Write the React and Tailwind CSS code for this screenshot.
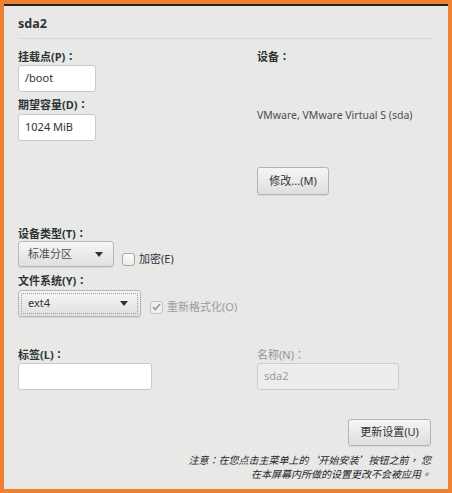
import React from 'react';

const font = { fontFamily: '"Noto Sans", "Noto Sans CJK SC", sans-serif' };
const tc = { fontFamily: '"Noto Sans CJK TC", sans-serif' };

// centred full-width punctuation, as the original GTK rendering shows it
const P = ({ children }) => <span style={tc}>{children}</span>;

const Label = ({ children, className = '' }) => (
  <div className={`h-[14px] leading-[14px] text-[11px] font-bold text-[#2e3436] ${className}`}>
    {children}
    <P>：</P>
  </div>
);

const Arrow = () => (
  <svg width="8" height="5" viewBox="0 0 8 5" className="shrink-0">
    <path d="M0 0h8L4 5z" fill="#2e3436" />
  </svg>
);

const Checkbox = ({ checked, disabled }) => (
  <span
    className={`flex items-center justify-center w-[13px] h-[13px] rounded-[3px] border ${
      disabled ? 'border-[#c4c4c4] bg-[#f0f0f0]' : 'border-[#a8a8a8] bg-gradient-to-b from-[#fbfbfb] to-[#ececec]'
    }`}
  >
    {checked && (
      <svg width="9" height="8" viewBox="0 0 9 8">
        <path d="M1 4.2l2.3 2.3L8 1" fill="none" stroke="#9a9a9a" strokeWidth="1.8" />
      </svg>
    )}
  </span>
);

export default function App() {
  return (
    <div style={font} className="w-[452px] h-[493px] border-4 border-[#ef8132] flex flex-col">
      <div className="flex-1 border-t-2 border-[#1d2426] bg-[#e8e8e7] pl-[14px] pr-[16px] flex flex-col">
        <div className="mt-[10px] h-[16px] leading-[16px] text-[12.5px] font-bold text-[#2e3436]">sda2</div>
        <div className="mt-[6px] h-px bg-[#d6d6d5]" />

        <div className="grid grid-cols-[239px_1fr]">
          <div className="flex flex-col">
            <Label className="mt-[10px]">挂载点(P)</Label>
            <div className="mt-[2px] w-[78px] h-[27px] bg-white border border-[#c9c9c9] rounded-[3px] px-[6px] flex items-center text-[11px] text-[#2e3436]">/boot</div>
            <Label className="mt-[5px]">期望容量(D)</Label>
            <div className="mt-[3px] w-[78px] h-[27px] bg-white border border-[#c9c9c9] rounded-[3px] px-[6px] flex items-center text-[11px] text-[#2e3436]">1024 MiB</div>
          </div>
          <div className="flex flex-col">
            <Label className="mt-[10px]">设备</Label>
            <div className="mt-[45px] h-[14px] leading-[14px] text-[10.5px] text-[#4a4f50]">VMware, VMware Virtual S (sda)</div>
            <button className="mt-[45px] w-[72px] h-[28px] rounded-[3px] border border-[#b4b4b4] bg-gradient-to-b from-[#f6f6f6] to-[#dedede] shadow-[0_1px_0_rgba(0,0,0,0.08)] text-[11px] text-[#2e3436]">修改...(M)</button>
          </div>
        </div>

        <Label className="mt-[31px]">设备类型(T)</Label>
        <div className="mt-[1px] flex items-start">
          <div className="w-[96px] h-[26px] rounded-[3px] border border-[#b8b8b8] bg-gradient-to-b from-[#f6f6f6] to-[#e0e0e0] shadow-[0_1px_0_rgba(0,0,0,0.08)] flex items-center justify-between pl-[9px] pr-[10px] text-[11px] text-[#4a4f50]">
            <span>标准分区</span>
            <Arrow />
          </div>
          <div className="ml-[8px] mt-[11px] flex items-center gap-[4px]">
            <Checkbox />
            <span className="text-[11px] leading-[14px] text-[#2e3436]">加密(E)</span>
          </div>
        </div>

        <Label className="mt-[6px]">文件系统(Y)</Label>
        <div className="mt-[3px] flex items-start">
          <div className="w-[123px] h-[27px] rounded-[3px] border border-[#b8b8b8] bg-gradient-to-b from-[#f6f6f6] to-[#e0e0e0] shadow-[0_1px_0_rgba(0,0,0,0.08)] p-[2px]">
            <div className="w-full h-full border border-dotted border-[#9a9a9a] flex items-center justify-between pl-[6px] pr-[9px] text-[11px] text-[#2e3436]">
              <span>ext4</span>
              <Arrow />
            </div>
          </div>
          <div className="ml-[9px] mt-[10px] flex items-center gap-[4px]">
            <Checkbox checked disabled />
            <span className="text-[11px] leading-[14px] text-[#9a9c9c]">重新格式化(O)</span>
          </div>
        </div>

        <div className="mt-[30px] grid grid-cols-[239px_1fr]">
          <div className="flex flex-col">
            <Label>标签(L)</Label>
            <div className="mt-[2px] w-[134px] h-[27px] bg-white border border-[#c9c9c9] rounded-[3px]" />
          </div>
          <div className="flex flex-col">
            <div className="h-[14px] leading-[14px] text-[11px] text-[#8f9292]">名称(N)<P>：</P></div>
            <div className="mt-[2px] w-[142px] h-[27px] bg-[#ededec] border border-[#cdcdcd] rounded-[3px] px-[6px] flex items-center text-[11px] text-[#9a9c9c]">sda2</div>
          </div>
        </div>

        <div className="mt-[29px] flex justify-end pr-[1px]">
          <button className="w-[83px] h-[27px] rounded-[3px] border border-[#b4b4b4] bg-gradient-to-b from-[#f6f6f6] to-[#dedede] shadow-[0_1px_0_rgba(0,0,0,0.08)] text-[11px] text-[#2e3436]">更新设置(U)</button>
        </div>

        <div className="mt-[7px] pr-[1px] text-right italic text-[10px] leading-[14px] text-[#222829]">
          <div>注意<P>：</P>在您点击主菜单上的<P>‘</P>开始安装<P>’</P>按钮之前<P>，</P> 您</div>
          <div>在本屏幕内所做的设置更改不会被应用<P>。</P></div>
        </div>
      </div>
    </div>
  );
}
